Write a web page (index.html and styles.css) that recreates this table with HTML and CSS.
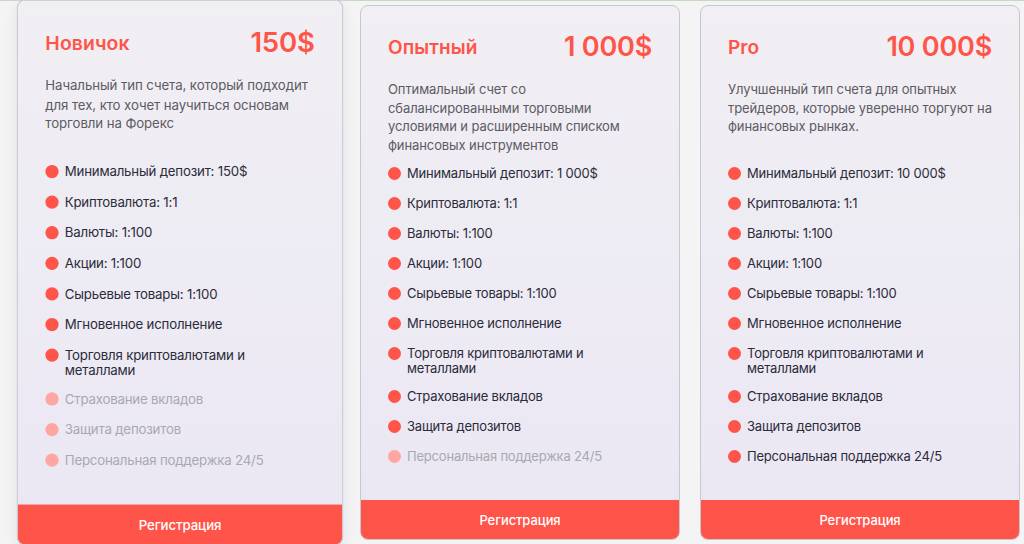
FILE: index.html
```html
<!DOCTYPE html>
<html lang="ru">
<head>
<meta charset="utf-8">
<title>Типы счетов</title>
<link rel="stylesheet" href="styles.css">
</head>
<body>
<main class="plans">
  <article class="card card--active">
    <div class="card__body">
      <header class="card__head">
        <h2 class="card__title">Новичок</h2>
        <span class="card__price">150$</span>
      </header>
      <p class="card__desc">Начальный тип счета, который подходит для тех, кто хочет научиться основам торговли на Форекс</p>
      <ul class="features">
        <li class="feature">Минимальный депозит: 150$</li>
        <li class="feature">Криптовалюта: 1:1</li>
        <li class="feature">Валюты: 1:100</li>
        <li class="feature">Акции: 1:100</li>
        <li class="feature">Сырьевые товары: 1:100</li>
        <li class="feature">Мгновенное исполнение</li>
        <li class="feature">Торговля криптовалютами и металлами</li>
        <li class="feature feature--off">Страхование вкладов</li>
        <li class="feature feature--off">Защита депозитов</li>
        <li class="feature feature--off">Персональная поддержка 24/5</li>
      </ul>
    </div>
    <a class="card__btn" href="#">Регистрация</a>
  </article>

  <article class="card">
    <div class="card__body">
      <header class="card__head">
        <h2 class="card__title">Опытный</h2>
        <span class="card__price">1 000$</span>
      </header>
      <p class="card__desc">Оптимальный счет со сбалансированными торговыми условиями и расширенным списком финансовых инструментов</p>
      <ul class="features">
        <li class="feature">Минимальный депозит: 1 000$</li>
        <li class="feature">Криптовалюта: 1:1</li>
        <li class="feature">Валюты: 1:100</li>
        <li class="feature">Акции: 1:100</li>
        <li class="feature">Сырьевые товары: 1:100</li>
        <li class="feature">Мгновенное исполнение</li>
        <li class="feature">Торговля криптовалютами и металлами</li>
        <li class="feature">Страхование вкладов</li>
        <li class="feature">Защита депозитов</li>
        <li class="feature feature--off">Персональная поддержка 24/5</li>
      </ul>
    </div>
    <a class="card__btn" href="#">Регистрация</a>
  </article>

  <article class="card">
    <div class="card__body">
      <header class="card__head">
        <h2 class="card__title">Pro</h2>
        <span class="card__price">10 000$</span>
      </header>
      <p class="card__desc">Улучшенный тип счета для опытных трейдеров, которые уверенно торгуют на финансовых рынках.</p>
      <ul class="features">
        <li class="feature">Минимальный депозит: 10 000$</li>
        <li class="feature">Криптовалюта: 1:1</li>
        <li class="feature">Валюты: 1:100</li>
        <li class="feature">Акции: 1:100</li>
        <li class="feature">Сырьевые товары: 1:100</li>
        <li class="feature">Мгновенное исполнение</li>
        <li class="feature">Торговля криптовалютами и металлами</li>
        <li class="feature">Страхование вкладов</li>
        <li class="feature">Защита депозитов</li>
        <li class="feature">Персональная поддержка 24/5</li>
      </ul>
    </div>
    <a class="card__btn" href="#">Регистрация</a>
  </article>
</main>
</body>
</html>
```

FILE: styles.css
```css
* {
  box-sizing: border-box;
}

html, body {
  margin: 0;
  height: 544px;
  overflow: hidden;
}

body {
  background: #f4f4f5;
  border-top: 1px solid #c8d6c8;
  font-family: Inter, "Noto Sans", sans-serif;
  color: #2b2b3a;
}

.plans {
  display: flex;
  gap: 20px;
  padding: 4px 0 0 20px;
}

.card {
  width: 320px;
  height: 535px;
  flex: none;
  display: flex;
  flex-direction: column;
  border: 1px solid #c9c6cf;
  border-radius: 8px;
  overflow: hidden;
  background: linear-gradient(180deg, #f1eff3 0%, #eae7f4 100%);
}

.card--active {
  transform: scale(1.02);
  box-shadow: 0 4px 14px rgba(60, 50, 80, 0.08);
}

.card__body {
  flex: 1;
  padding: 24px 27px 0 27px;
}

.card__head {
  display: flex;
  justify-content: space-between;
  align-items: center;
}

.card__title {
  margin: 0;
  padding-top: 2px;
  font-size: 19px;
  font-weight: 600;
  color: #ff5449;
  line-height: 32px;
  letter-spacing: 0.1px;
}

.card__price {
  font-size: 27px;
  font-weight: 600;
  color: #ff5449;
  line-height: 32px;
  letter-spacing: -0.2px;
}

.card__desc {
  margin: 16px 0 0;
  min-height: 76px;
  font-size: 13px;
  line-height: 18.7px;
  letter-spacing: -0.1px;
  color: #5c5b63;
}

.features {
  list-style: none;
  margin: 9px 0 0;
  padding: 0;
  display: flex;
  flex-direction: column;
  gap: 12px;
}

.feature {
  display: flex;
  align-items: flex-start;
  gap: 6px;
  min-height: 18px;
  padding-top: 1px;
  font-size: 13px;
  line-height: 15px;
  letter-spacing: -0.2px;
  color: #2b2b3a;
}

.feature::before {
  content: "";
  flex: none;
  width: 13px;
  height: 13px;
  margin-top: 1px;
  border-radius: 50%;
  background: #ff5449;
}

.feature--off {
  color: #a9a8b0;
}

.feature--off::before {
  background: #ffa6a3;
}

.card__btn {
  display: flex;
  align-items: center;
  justify-content: center;
  height: 39px;
  flex: none;
  background: #ff5449;
  color: #ffffff;
  font-size: 13px;
  font-weight: 500;
  letter-spacing: -0.1px;
  text-decoration: none;
}
```
